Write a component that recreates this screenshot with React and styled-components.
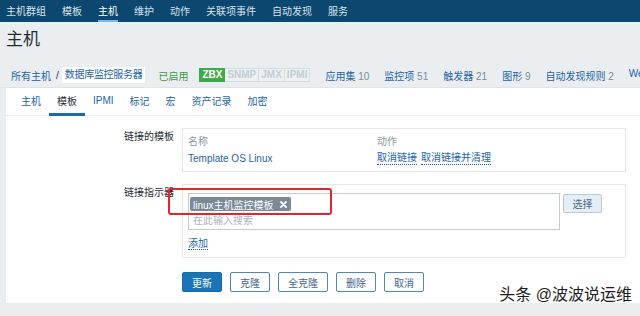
import React from "react";
import styled, { createGlobalStyle } from "styled-components";

const GlobalStyle = createGlobalStyle`
  html, body {
    margin: 0;
    padding: 0;
    background: #ebeef1;
    overflow: hidden;
  }
  body {
    font-family: "Liberation Sans", "Noto Sans CJK SC", sans-serif;
    font-size: 10px;
    color: #1f2c33;
  }
`;

const Page = styled.div`
  position: relative;
  width: 640px;
  height: 316px;
  overflow: hidden;
  background: #ebeef1;
`;

// top navigation
const Nav = styled.nav`
  display: flex;
  height: 22px;
  background: #0b476f;
  padding-left: 6px;
  gap: 16px;
`;

const NavItem = styled.div`
  display: flex;
  align-items: center;
  box-sizing: border-box;
  height: 22px;
  font-size: 10px;
  color: ${(p) => (p.$active ? "#ffffff" : "#d9e3ea")};
  border-bottom: 2px solid ${(p) => (p.$active ? "#7db8e8" : "transparent")};
  white-space: nowrap;
`;

const Header = styled.header`
  padding: 7px 0 4px;
  border-bottom: 1px solid #dfe4e7;
`;

const Title = styled.h1`
  margin: 0 0 16px 6px;
  font-size: 17px;
  line-height: 22px;
  font-weight: normal;
  color: #1f2c33;
`;

const Breadcrumbs = styled.div`
  display: flex;
  align-items: center;
  height: 16px;
  padding-left: 11px;
  white-space: nowrap;
`;

const Crumb = styled.span`
  color: #1c63a8;
`;

const Slash = styled.span`
  margin: 0 3px 0 5px;
  color: #1f2c33;
`;

const CurrentCrumb = styled.span`
  background: #ffffff;
  color: #1c63a8;
  padding: 2px 3px;
  line-height: 12px;
  letter-spacing: -0.3px;
`;

const Status = styled.span`
  margin-left: 13px;
  color: #3d9b43;
`;

const Badges = styled.div`
  display: flex;
  margin-left: 11px;
  margin-right: 15px;
`;

const Badge = styled.span`
  box-sizing: border-box;
  height: 14px;
  line-height: 12px;
  padding: 0 2px;
  font-weight: bold;
  font-size: 10px;
  border: 1px solid ${(p) => (p.$on ? "#3fa94a" : "#d6dce0")};
  border-left-width: ${(p) => (p.$first ? "1px" : "0")};
  background: ${(p) => (p.$on ? "#3fa94a" : "#eef1f3")};
  color: ${(p) => (p.$on ? "#ffffff" : "#c3ccd2")};
`;

const Stats = styled.div`
  display: flex;
  gap: 15px;
`;

const Stat = styled.span`
  color: #1c63a8;
  & b {
    font-weight: normal;
    color: #768d99;
  }
`;

// main panel
const Panel = styled.main`
  margin-left: 6px;
  height: 215px;
  background: #ffffff;
`;

const Tabs = styled.div`
  display: flex;
  height: 27px;
  padding-left: 7px;
  border-bottom: 1px solid #ebeef1;
`;

const Tab = styled.div`
  display: flex;
  align-items: center;
  box-sizing: border-box;
  height: 28px;
  padding: 0 8px;
  color: ${(p) => (p.$active ? "#1f2c33" : "#1c63a8")};
  border-bottom: 3px solid ${(p) => (p.$active ? "#1d6aa8" : "transparent")};
  white-space: nowrap;
`;

const Form = styled.div`
  display: grid;
  grid-template-columns: 168px 444px;
  column-gap: 8px;
  row-gap: 12px;
  padding-top: 12px;
`;

const Label = styled.div`
  text-align: right;
  padding-top: 3px;
  line-height: 12px;
  color: #1f2c33;
`;

const Box = styled.div`
  box-sizing: border-box;
  height: ${(p) => p.$h}px;
  border: 1px solid #e3e7ea;
  padding: ${(p) => p.$pad};
`;

const LinkTable = styled.div`
  display: grid;
  grid-template-columns: 189px 1fr;
  grid-auto-rows: 18px;
  align-items: center;
`;

const Th = styled.span`
  color: #8a9aa5;
`;

const TLink = styled.span`
  color: #1c63a8;
`;

const Actions = styled.div`
  display: flex;
  gap: 4px;
`;

const DotLink = styled.span`
  color: #1c63a8;
  border-bottom: 1px dotted #1c63a8;
  line-height: 12px;
`;

const MultiRow = styled.div`
  display: flex;
  align-items: flex-start;
`;

const MultiInput = styled.div`
  box-sizing: border-box;
  width: 372px;
  height: 37px;
  border: 1px solid #c4ccd1;
  padding: 3px 0 0 1px;
`;

const Tag = styled.span`
  display: inline-flex;
  align-items: center;
  gap: 6px;
  height: 14px;
  padding: 0 4px 0 3px;
  background: #778a96;
  color: #ffffff;
  border-radius: 2px;
`;

const Placeholder = styled.div`
  margin-top: 3px;
  padding-left: 3px;
  color: #a9b4bb;
  line-height: 14px;
`;

const SelectButton = styled.button`
  box-sizing: border-box;
  margin: 1px 0 0 3px;
  width: 39px;
  height: 19px;
  padding: 0;
  font: inherit;
  color: #4b6a84;
  background: #e4eef6;
  border: 1px solid #b5cadb;
  border-radius: 2px;
`;

const AddLink = styled.div`
  margin-top: 8px;
  line-height: 12px;
  & span {
    color: #1c63a8;
    border-bottom: 1px dotted #1c63a8;
  }
`;

const ButtonRow = styled.div`
  grid-column: 2;
  display: flex;
  gap: 8px;
  margin-top: 2px;
`;

const Button = styled.button`
  box-sizing: border-box;
  height: 20px;
  padding: 0 9px;
  font: inherit;
  border-radius: 2px;
  border: 1px solid ${(p) => (p.$primary ? "#1569a8" : "#4c88bd")};
  background: ${(p) => (p.$primary ? "#1a74b7" : "#ffffff")};
  color: ${(p) => (p.$primary ? "#ffffff" : "#3f678c")};
`;

// annotation on top of the screenshot
const Highlight = styled.div`
  position: absolute;
  left: 168px;
  top: 188px;
  width: 164px;
  height: 27px;
  box-sizing: border-box;
  border: 2px solid #e3242b;
  border-radius: 3px;
`;

const Watermark = styled.div`
  position: absolute;
  right: 8px;
  top: 286px;
  font-size: 16px;
  line-height: 18px;
  color: #1d1d1d;
  text-shadow: 0 0 2px #ffffff, 0 0 1px #ffffff;
  white-space: nowrap;
`;

const CloseIcon = () => (
  <svg width="7" height="7" viewBox="0 0 7 7">
    <path d="M1 1L6 6M6 1L1 6" stroke="#ffffff" strokeWidth="1.8" strokeLinecap="round" />
  </svg>
);

const navItems = ["主机群组", "模板", "主机", "维护", "动作", "关联项事件", "自动发现", "服务"];
const tabs = ["主机", "模板", "IPMI", "标记", "宏", "资产记录", "加密"];
const stats = [
  ["应用集", "10"],
  ["监控项", "51"],
  ["触发器", "21"],
  ["图形", "9"],
  ["自动发现规则", "2"],
  ["We", ""],
];

export default function App() {
  return (
    <Page>
      <GlobalStyle />
      <Nav>
        {navItems.map((item) => (
          <NavItem key={item} $active={item === "主机"}>
            {item}
          </NavItem>
        ))}
      </Nav>

      <Header>
        <Title>主机</Title>
        <Breadcrumbs>
          <Crumb>所有主机</Crumb>
          <Slash>/</Slash>
          <CurrentCrumb>数据库监控服务器</CurrentCrumb>
          <Status>已启用</Status>
          <Badges>
            <Badge $on $first>ZBX</Badge>
            <Badge>SNMP</Badge>
            <Badge>JMX</Badge>
            <Badge>IPMI</Badge>
          </Badges>
          <Stats>
            {stats.map(([name, count]) => (
              <Stat key={name}>
                {name}
                {count && <b> {count}</b>}
              </Stat>
            ))}
          </Stats>
        </Breadcrumbs>
      </Header>

      <Panel>
        <Tabs>
          {tabs.map((t) => (
            <Tab key={t} $active={t === "模板"}>
              {t}
            </Tab>
          ))}
        </Tabs>

        <Form>
          <Label>链接的模板</Label>
          <Box $h={44} $pad="2px 5px">
            <LinkTable>
              <Th>名称</Th>
              <Th>动作</Th>
              <TLink>Template OS Linux</TLink>
              <Actions>
                <DotLink>取消链接</DotLink>
                <DotLink>取消链接并清理</DotLink>
              </Actions>
            </LinkTable>
          </Box>

          <Label>链接指示器</Label>
          <Box $h={74} $pad="8px 5px 0">
            <MultiRow>
              <MultiInput>
                <Tag>
                  linux主机监控模板
                  <CloseIcon />
                </Tag>
                <Placeholder>在此输入搜索</Placeholder>
              </MultiInput>
              <SelectButton>选择</SelectButton>
            </MultiRow>
            <AddLink>
              <span>添加</span>
            </AddLink>
          </Box>

          <ButtonRow>
            <Button $primary>更新</Button>
            <Button>克隆</Button>
            <Button>全克隆</Button>
            <Button>删除</Button>
            <Button>取消</Button>
          </ButtonRow>
        </Form>
      </Panel>

      <Highlight />
      <Watermark>头条 @波波说运维</Watermark>
    </Page>
  );
}
